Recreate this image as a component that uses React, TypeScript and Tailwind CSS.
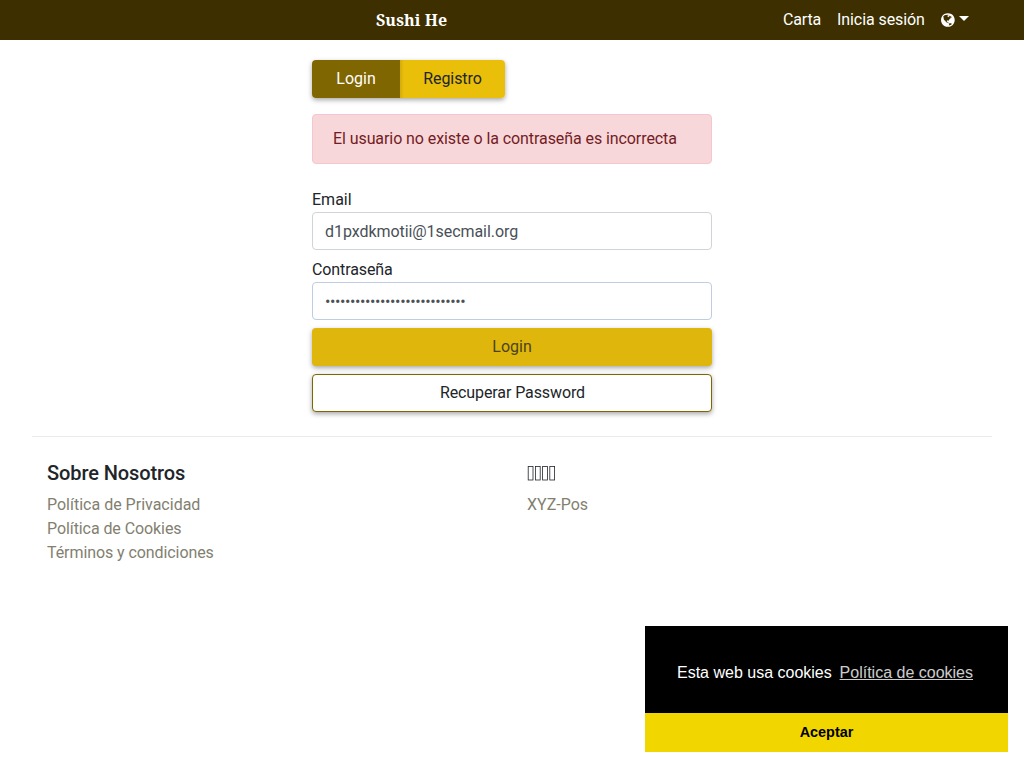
const shadow = "shadow-[0_2px_5px_rgba(0,0,0,0.35)]";

function GlobeIcon() {
  return (
    <svg viewBox="0 0 1536 1792" className="h-4 w-[13.71px] fill-current" aria-hidden="true">
      <path d="M768 128q209 0 385.5 103t279.5 279.5 103 385.5-103 385.5-279.5 279.5-385.5 103-385.5-103-279.5-279.5-103-385.5 103-385.5 279.5-279.5 385.5-103zm274 521q-2 1-9.5 9.5t-13.5 9.5q2 0 4.5-5t5-11 3.5-7q6-7 22-15 14-6 52-12 34-8 51 11-2-2 9.5-13t14.5-12q3-2 15-4.5t15-7.5l2-22q-12 1-17.5-7t-6.5-21q0 2-6 8 0-7-4.5-8t-11.5 1-9 1q-10-3-15-7.5t-8-16.5-4-15q-2-5-9.5-11t-9.5-10q-1-2-2.5-5.5t-3-6.5-4-5.5-5.5-2.5-7 5-7.5 10-4.5 5q-3-2-6-1.5t-4.5 1-4.5 3-5 3.5q-3 2-8.5 3t-8.5 2q15-5-1-11-10-4-16-3 9-4 7.5-12t-8.5-14h5q-1-4-8.5-8.5t-17.5-8.5-13-6q-8-5-34-9.5t-33-.5q-5 6-4.5 10.5t4 14 3.5 12.5q1 6-5.5 13t-6.5 12q0 7 14 15.5t10 21.5q-3 8-16 16t-16 12q-5 8-1.5 18.5t10.5 16.5q2 2 1.5 4t-3.5 4.5-5.5 4-6.5 3.5l-3 2q-11 5-20.5-6t-13.5-26q-7-25-16-30-23-8-29 1-5-13-41-26-25-9-58-4 6-1 0-15-7-15-19-12 3-6 4-17.5t1-13.5q3-13 12-23 1-1 7-8.5t9.5-13.5.5-6q35 4 50-11 5-5 11.5-17t10.5-17q9-6 14-5.5t14.5 5.5 14.5 5q14 1 15.5-11t-7.5-20q12 1 3-17-5-7-8-9-12-4-27 5-8 4 2 8-1-1-9.5 10.5t-16.5 17.5-16-5q-1-1-5.5-13.5t-9.5-13.5q-8 0-16 15 3-8-11-15t-24-8q19-12-8-27-7-4-20.5-5t-19.5 4q-5 7-5.5 11.5t5 8 10.5 5.5 11.5 4 8.5 3q14 10 8 14-2 1-8.5 3.5t-11.5 4.5-6 4q-3 4 0 14t-2 14q-5-5-9-17.5t-7-16.5q7 9-25 6l-10-1q-4 0-16 2t-20.5 1-13.5-8q-4-8 0-20 1-4 4-2-4-3-11-9.5t-10-8.5q-46 15-94 41 6 1 12-1 5-2 13-6.5t10-5.5q34-14 42-7l5-5q14 16 20 25-7-4-30-1-20 6-22 12 7 12 5 18-4-3-11.5-10t-14.5-11-15-5q-16 0-22 1-146 80-235 222 7 7 12 8 4 1 5 9t2.5 11 11.5-3q9 8 3 19 1-1 44 27 19 17 21 21 3 11-10 18-1-2-9-9t-9-4q-3 5 .5 18.5t10.5 12.5q-7 0-9.5 16t-2.5 35.5-1 23.5l2 1q-3 12 5.5 34.5t21.5 19.5q-13 3 20 43 6 8 8 9 3 2 12 7.5t15 10 10 10.5q4 5 10 22.5t14 23.5q-2 6 9.5 20t10.5 23q-1 0-2.5 1t-2.5 1q3 7 15.5 14t15.5 13q1 3 2 10t3 11 8 2q2-20-24-62-15-25-17-29-3-5-5.5-15.5t-4.5-14.5q2 0 6 1.5t8.5 3.5 7.5 4 2 3q-3 7 2 17.5t12 18.5 17 19 12 13q6 6 14 19.5t0 13.5q9 0 20 10t17 20q5 8 8 26t5 24q2 7 8.5 13.5t12.5 9.5l16 8 13 7q5 2 18.5 10.5t21.5 11.5q10 4 16 4t14.5-2.5 13.5-3.5q15-2 29 15t21 21q36 19 55 11-2 1 .5 7.5t8 15.5 9 14.5 5.5 8.5q5 6 18 15t18 15q6-4 7-9-3 8 7 20t18 10q14-3 14-32-31 15-49-18 0-1-2.5-5.5t-4-8.5-2.5-8.5 0-7.5 5-3q9 0 10-3.5t-2-12.5-4-13q-1-8-11-20t-12-15q-5 9-16 8t-16-9q0 1-1.5 5.5t-1.5 6.5q-13 0-15-1 1-3 2.5-17.5t3.5-22.5q1-4 5.5-12t7.5-14.5 4-12.5-4.5-9.5-17.5-2.5q-19 1-26 20-1 3-3 10.5t-5 11.5-9 7q-7 3-24 2t-24-5q-13-8-22.5-29t-9.5-37q0-10 2.5-26.5t3-25-5.5-24.5q3-2 9-9.5t10-10.5q2-1 4.5-1.5t4.5 0 4-1.5 3-6q-1-1-4-3-3-3-4-3 7 3 28.5-1.5t27.5 1.5q15 11 22-2 0-1-2.5-9.5t-.5-13.5q5 27 29 9 3 3 15.5 5t17.5 5q3 2 7 5.5t5.5 4.5 5-.5 8.5-6.5q10 14 12 24 11 40 19 44 7 3 11 2t4.5-9.5 0-14-1.5-12.5l-1-8v-18l-1-8q-15-3-18.5-12t1.5-18.5 15-18.5q1-1 8-3.5t15.5-6.5 12.5-8q21-19 15-35 7 0 11-9-1 0-5-3t-7.5-5-4.5-2q9-5 2-16 5-3 7.5-11t7.5-10q9 12 21 2 7-8 1-16 5-7 20.5-10.5t18.5-9.5q7 2 8-2t1-12 3-12q4-5 15-9t13-5l17-11q3-4 0-4 18 2 31-11 10-11-6-20 3-6-3-9.5t-15-5.5q3-1 11.5-.5t10.5-1.5q15-10-7-16-17-5-43 12zm-163 877q206-36 351-189-3-3-12.5-4.5t-12.5-3.5q-18-7-24-8 1-7-2.5-13t-8-9-12.5-8-11-7q-2-2-7-6t-7-5.5-7.5-4.5-8.5-2-10 1l-3 1q-3 1-5.5 2.5t-5.5 3-4 3 0 2.5q-21-17-36-22-5-1-11-5.5t-10.5-7-10-1.5-11.5 7q-5 5-6 15t-2 13q-7-5 0-17.5t2-18.5q-3-6-10.5-4.5t-12 4.5-11.5 8.5-9 6.5-8.5 5.5-8.5 7.5q-3 4-6 12t-5 11q-2-4-11.5-6.5t-9.5-5.5q2 10 4 35t5 38q7 31-12 48-27 25-29 40-4 22 12 26 0 7-8 20.5t-7 21.5q0 6 2 16z" />
    </svg>
  );
}

function MissingGlyphs() {
  return (
    <svg viewBox="0 0 30 24" className="mb-2 block h-6 w-[30px] fill-none stroke-[#212529] stroke-[0.8]" aria-hidden="true">
      <rect x="1.2" y="5.5" width="4.8" height="13.5" />
      <rect x="8.4" y="5.5" width="4.8" height="13.5" />
      <rect x="15.6" y="5.5" width="4.8" height="13.5" />
      <rect x="22.8" y="5.5" width="4.8" height="13.5" />
    </svg>
  );
}

export default function App() {
  return (
    <div className="min-h-screen bg-white font-['Roboto',sans-serif] text-base leading-6 text-[#212529]">
      <nav className="flex h-10 items-center bg-[#3d2f00] text-white">
        <div className="w-[376px]" />
        <a className="w-[407px] font-['Noto_Serif','Liberation_Serif',serif] font-bold tracking-[0.1px]">Sushi He</a>
        <div className="flex items-center">
          <a className="w-[54px] tracking-[-0.15px]">Carta</a>
          <a className="w-[104px] tracking-[-0.08px]">Inicia sesión</a>
          <a className="flex items-center gap-1">
            <GlobeIcon />
            <span className="mb-[4px] border-x-5 border-t-5 border-x-transparent border-t-white" />
          </a>
        </div>
      </nav>
      <main className="mx-auto w-[400px] pt-5">
        <div className={`flex h-[38px] w-[193px] overflow-hidden rounded ${shadow}`}>
          <button className="w-[88px] bg-[#806600] text-white">Login</button>
          <button className="flex-1 bg-[linear-gradient(to_right,#d3ac09,#eabf0a_4px)] tracking-[-0.08px]">Registro</button>
        </div>
        <div className="mt-4 h-[50px] rounded border border-[#f5c6cb] bg-[#f8d7da] px-5 py-3 tracking-[-0.08px] text-[#721c24]">El usuario no existe o la contraseña es incorrecta</div>
        <label className="mt-6 block">Email</label>
        <input className="block h-[38px] w-full rounded border border-[#ced4da] px-3 tracking-[-0.06px] text-[#495057]" defaultValue="d1pxdkmotii@1secmail.org" />
        <label className="mt-2 block tracking-[-0.1px]">Contraseña</label>
        <input type="password" className="block h-[38px] w-full rounded border border-[#bfcde0] px-3 tracking-[-0.39px] text-[#495057]" defaultValue="1234567890123456789012345678" />
        <button className={`mt-2 block h-[38px] w-full rounded bg-[#dfb60b] text-[#4b431f] ${shadow}`}>Login</button>
        <button className={`mt-2 block h-[38px] w-full rounded border border-[#806600] bg-white pl-px tracking-[-0.1px] ${shadow}`}>Recuperar Password</button>
      </main>
      <footer className="mx-8 mt-6 flex border-t border-black/8 pt-6">
        <div className="w-[480px] pl-[15px]">
          <h5 className="mb-2 text-xl leading-6 font-medium tracking-[-0.1px]">Sobre Nosotros</h5>
          <div className="flex flex-col tracking-[-0.08px] text-[#828070]">
            <a className="tracking-normal">Política de Privacidad</a>
            <a>Política de Cookies</a>
            <a>Términos y condiciones</a>
          </div>
        </div>
        <div className="pl-[15px]">
          <MissingGlyphs />
          <a className="text-[#828070]">XYZ-Pos</a>
        </div>
      </footer>
      <div className="fixed right-4 bottom-4 flex h-[126px] w-[363px] flex-col bg-black font-['Liberation_Sans',sans-serif] text-white">
        <div className="h-[87px] pt-[35px] pl-8">Esta web usa cookies <a className="ml-[3.4px] underline opacity-80">Política de cookies</a></div>
        <button className="flex-1 bg-[#f1d600] pb-[2px] text-[14.4px] font-bold text-black">Aceptar</button>
      </div>
    </div>
  );
}
